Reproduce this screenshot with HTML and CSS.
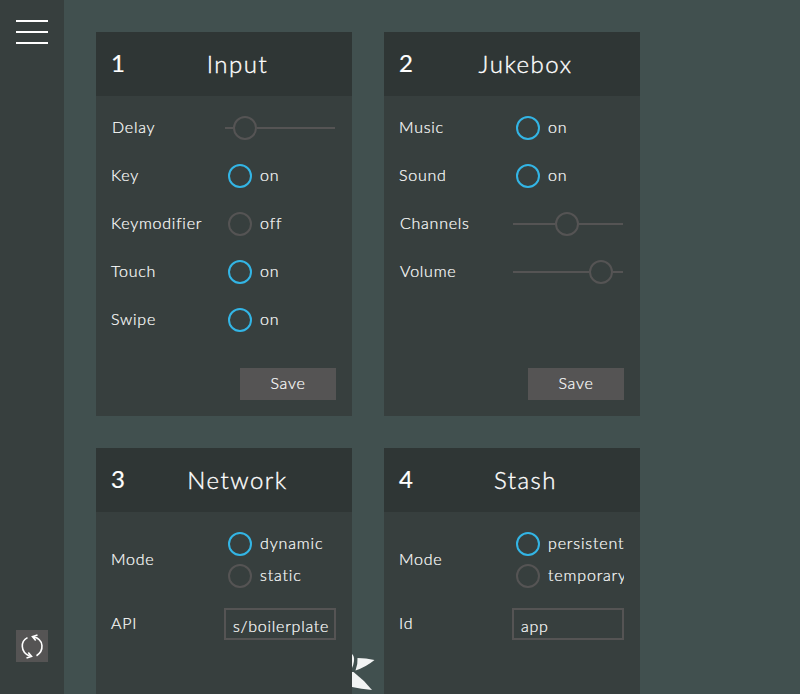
FILE: index.html
```
<!DOCTYPE html>
<html lang="en">
<head>
<meta charset="utf-8">
<title>Settings</title>
<link rel="stylesheet" href="styles.css">
</head>
<body>
<aside class="sidebar">
  <div class="menu"><i></i><i></i><i></i></div>
  <button class="refresh" aria-label="Refresh">
    <svg viewBox="0 0 32 32" width="32" height="32" fill="none" stroke="#fff" stroke-width="1.6">
      <path d="M11.5 7.6C4.500 11 4 22 13.500 26M10.500 28L15.500 26.400L12.300 22.600"/>
      <path d="M20.500 25.700C28 21 28.500 9.500 17.500 6.800M21.500 5L16.500 6.600L19.700 10.400"/>
    </svg>
  </button>
</aside>
<svg class="emblem" viewBox="0 0 24 42" width="24" height="42" fill="#f2f4f4">
  <path d="M0 2Q2.500 4 2 9Q1.500 13 0 16Z"/>
  <path d="M5.500 6Q14 6 22.500 8Q14 15 3.500 18.500Q6 12 5.500 6Z"/>
  <path d="M0 20L1.500 20Q12 28 20 38Q9 37 0 35Z"/>
</svg>
<main class="grid">
  <section class="card">
    <header><b>1</b><h3>Input</h3></header>
    <div class="body">
      <div class="row"><label class="l1">Delay</label><div class="range"><i class="track short"></i><i class="knob"></i><i class="track"></i></div></div>
      <div class="row"><label>Key</label><div class="choice on">on</div></div>
      <div class="row"><label>Keymodifier</label><div class="choice">off</div></div>
      <div class="row"><label>Touch</label><div class="choice on">on</div></div>
      <div class="row"><label>Swipe</label><div class="choice on">on</div></div>
    </div>
    <button class="save">Save</button>
  </section>
  <section class="card">
    <header><b>2</b><h3>Jukebox</h3></header>
    <div class="body">
      <div class="row"><label>Music</label><div class="choice on">on</div></div>
      <div class="row"><label>Sound</label><div class="choice on">on</div></div>
      <div class="row"><label class="l1">Channels</label><div class="range"><i class="track mid"></i><i class="knob"></i><i class="track"></i></div></div>
      <div class="row"><label class="l1">Volume</label><div class="range"><i class="track long"></i><i class="knob"></i><i class="track"></i></div></div>
    </div>
    <button class="save">Save</button>
  </section>
  <section class="card">
    <header><b>3</b><h3>Network</h3></header>
    <div class="body">
      <div class="row double"><label>Mode</label><div class="choices"><div class="choice on">dynamic</div><div class="choice">static</div></div></div>
      <div class="row"><label>API</label><div class="field">s/boilerplate</div></div>
    </div>
  </section>
  <section class="card">
    <header><b>4</b><h3>Stash</h3></header>
    <div class="body">
      <div class="row double"><label>Mode</label><div class="choices"><div class="choice on">persistent</div><div class="choice">temporary</div></div></div>
      <div class="row"><label>Id</label><div class="field">app</div></div>
    </div>
  </section>
</main>
</body>
</html>
```
FILE: styles.css
```
*, *::before { box-sizing: border-box; }
body {
  margin: 0;
  height: 694px;
  overflow: hidden;
  display: flex;
  background: #41504f;
  color: #fff;
  font: 300 16px/32px Lato, "Liberation Sans", sans-serif;
  letter-spacing: .75px;
  -webkit-text-stroke: .2px #fff;
}
button { border: 0; padding: 0; color: inherit; font: inherit; letter-spacing: inherit; background: #555454; }
.sidebar {
  width: 64px;
  height: 694px;
  padding: 20px 16px 32px;
  display: flex;
  flex-direction: column;
  justify-content: space-between;
  background: #373f3e;
}
.menu { display: flex; flex-direction: column; gap: 9px; }
.menu i { height: 2px; background: #fff; }
.refresh { width: 32px; height: 32px; }
.refresh svg { display: block; }
.emblem { position: absolute; left: 352px; top: 652px; }
.grid {
  display: grid;
  grid-template-columns: 256px 256px;
  grid-template-rows: 384px 246px;
  gap: 32px;
  padding: 32px 32px 0;
}
.card { display: flex; flex-direction: column; background: #373f3e; }
.card header {
  height: 64px;
  padding: 0 16px 1px;
  display: flex;
  align-items: center;
  background: #2f3635;
}
.card b { width: 14px; margin-left: -1px; padding-bottom: 1px; font-size: 24px; font-weight: 400; letter-spacing: 0; }
.card h3 { flex: 1; margin: 0 0 0 14px; text-align: center; font-size: 24px; font-weight: 300; letter-spacing: 1.5px; -webkit-text-stroke: .35px #fff; }
.body { flex: 1; padding: 8px 16px; }
.row { height: 48px; display: flex; align-items: center; }
.row.double { height: 80px; }
.row label { width: 113px; margin-left: -1px; padding-bottom: 2px; white-space: nowrap; }
.row .l1 { width: 112px; margin-left: 0; }
.choices { width: 112px; }
.choice { width: 112px; height: 32px; display: flex; align-items: center; overflow: hidden; line-height: 30px; padding-bottom: 2px; letter-spacing: .85px; }
.choice::before, .knob {
  flex: none;
  width: 24px;
  height: 24px;
  border: 2px solid #555454;
  border-radius: 50%;
}
.choice::before { content: ""; margin: 2px 8px 0 4px; }
.choice.on::before { border-color: #33b5e5; }
.range { width: 112px; padding: 0 1px; display: flex; align-items: center; }
.track { flex: 1; height: 2px; background: #555454; }
.track.short { flex: none; width: 8px; }
.track.mid { flex: none; width: 42px; }
.track.long { flex: none; width: 76px; }
.field { width: 112px; height: 32px; padding: 0 7px; border: 2px solid #555454; white-space: nowrap; overflow: hidden; }
.save { align-self: flex-end; width: 96px; height: 32px; margin: 0 16px 16px 0; line-height: 30px; padding-bottom: 2px; }
```
